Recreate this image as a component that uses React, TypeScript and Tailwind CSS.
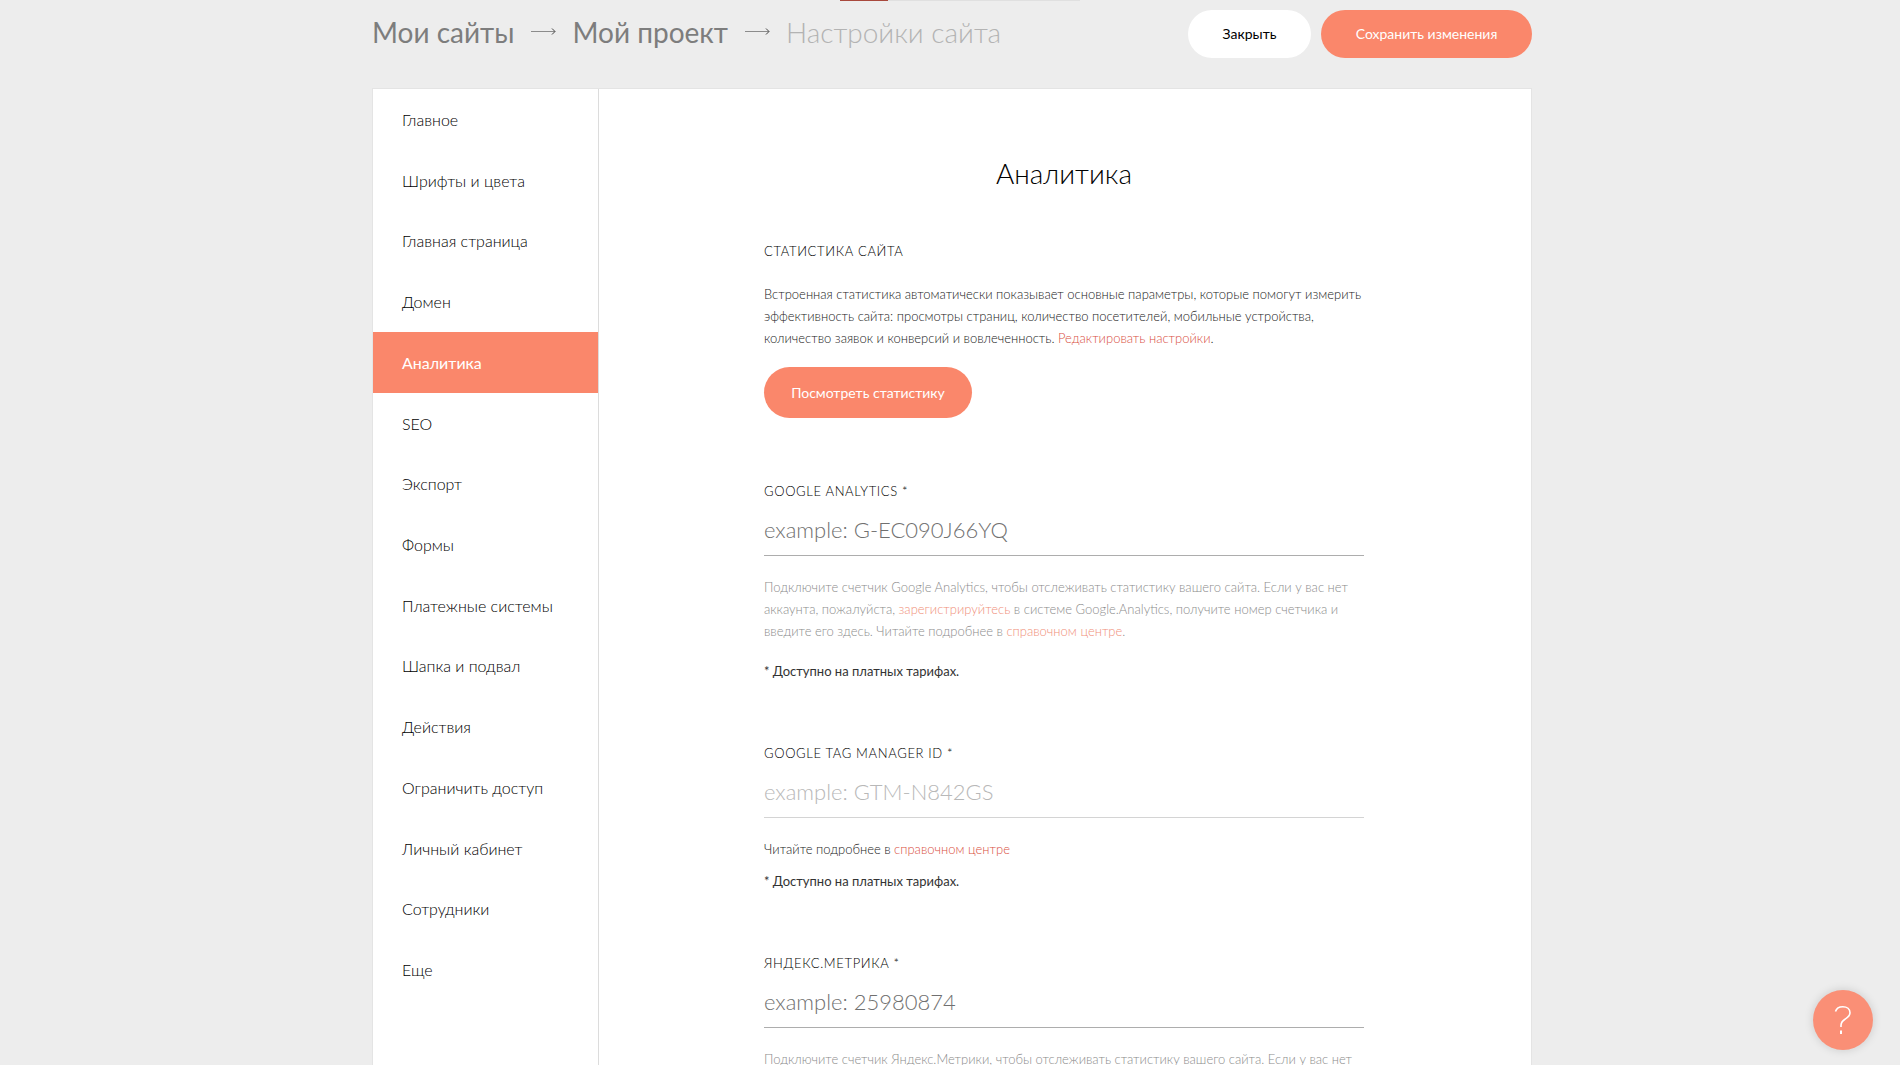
import React, { useState } from 'react';

interface NavItem {
  id: string;
  label: string;
}

interface CounterFieldProps {
  id: string;
  label: string;
  placeholder: string;
  muted?: boolean;
  className?: string;
  children: React.ReactNode;
}

const navItems: NavItem[] = [
  { id: 'main', label: 'Главное' },
  { id: 'fonts', label: 'Шрифты и цвета' },
  { id: 'home', label: 'Главная страница' },
  { id: 'domain', label: 'Домен' },
  { id: 'analytics', label: 'Аналитика' },
  { id: 'seo', label: 'SEO' },
  { id: 'export', label: 'Экспорт' },
  { id: 'forms', label: 'Формы' },
  { id: 'payments', label: 'Платежные системы' },
  { id: 'header', label: 'Шапка и подвал' },
  { id: 'actions', label: 'Действия' },
  { id: 'access', label: 'Ограничить доступ' },
  { id: 'members', label: 'Личный кабинет' },
  { id: 'team', label: 'Сотрудники' },
  { id: 'more', label: 'Еще' },
];

const Arrow: React.FC = () => (
  <svg className="mx-4 h-3 w-[26px] shrink-0" viewBox="0 0 26 12" fill="none" aria-hidden="true">
    <path d="M1 5.5H25" stroke="#8c8c8c" />
    <path d="M22 2.5L25 5.5L22 8.5" stroke="#444" />
  </svg>
);

const PaidNote: React.FC = () => (
  <p className="text-[13px] leading-[22px] font-normal text-[#333]">* Доступно на платных тарифах.</p>
);

const CounterField: React.FC<CounterFieldProps> = ({ id, label, placeholder, muted, className, children }) => {
  const [value, setValue] = useState('');

  return (
    <section className={className}>
      <label htmlFor={id} className="block text-[13px] leading-4 tracking-wider uppercase">
        {label} *
      </label>
      <input
        id={id}
        type="text"
        value={value}
        onChange={e => setValue(e.target.value)}
        placeholder={placeholder}
        className={
          muted
            ? 'mt-2 block h-[49px] w-full border-b border-[#d4d4d4] pb-1 text-[22px] outline-none placeholder:text-[#b8b8b8]'
            : 'mt-2 block h-[49px] w-full border-b border-[#adadad] pb-1 text-[22px] outline-none placeholder:text-[#707070]'
        }
      />
      <div className="mt-5">{children}</div>
    </section>
  );
};

const App: React.FC = () => {
  const [activeItem, setActiveItem] = useState('analytics');

  return (
    <div className="min-h-screen bg-[#ededed] font-['Lato','Open_Sans',sans-serif] font-light text-black">
      <div className="pl-5">
        <div className="mx-auto h-px w-60 bg-[#e0e0e0]">
          <div className="h-px w-1/5 bg-[#a8483c]" />
        </div>
      </div>

      <div className="pl-1">
        <div className="mx-auto max-w-[1160px]">
          <header className="flex h-[87px] items-start justify-between pt-[9px]">
            <nav className="flex h-11 items-center text-[28px] leading-9" aria-label="Навигация">
              <a href="#sites" className="font-normal text-[#7d7d7d]">Мои сайты</a>
              <Arrow />
              <a href="#project" className="font-normal text-[#7d7d7d]">Мой проект</a>
              <Arrow />
              <span className="text-[#b3b3b3]">Настройки сайта</span>
            </nav>
            <div className="flex gap-[10px] text-sm font-normal">
              <button type="button" className="h-12 w-[123px] rounded-full bg-white">
                Закрыть
              </button>
              <button type="button" className="h-12 w-[211px] rounded-full bg-[#fa876b] text-white">
                Сохранить изменения
              </button>
            </div>
          </header>

          <div className="flex border border-[#e4e4e4] bg-white">
            <aside className="w-[226px] shrink-0 border-r border-[#dcdcdc]">
              <ul className="grid min-h-[911px] auto-rows-fr">
                {navItems.map(item => (
                  <li key={item.id}>
                    <a
                      href={`#${item.id}`}
                      onClick={() => setActiveItem(item.id)}
                      className={
                        item.id === activeItem
                          ? 'flex h-full items-center bg-[#fa876b] px-[29px] pt-px text-base font-normal text-white'
                          : 'flex h-full items-center px-[29px] pt-px text-base text-black'
                      }
                    >
                      {item.label}
                    </a>
                  </li>
                ))}
              </ul>
            </aside>

            <main className="flex-1 pt-16 pr-0.5 pb-20">
              <div className="mx-auto max-w-[600px]">
                <h1 className="text-center text-[28px] leading-10">Аналитика</h1>

                <section className="mt-[50px]">
                  <h2 className="text-[13px] leading-4 tracking-wider uppercase">Статистика сайта</h2>
                  <p className="mt-6 text-[13px] leading-[22px] whitespace-nowrap text-[#222]">
                    Встроенная статистика автоматически показывает основные параметры, которые помогут измерить
                    <br />
                    эффективность сайта: просмотры страниц, количество посетителей, мобильные устройства,
                    <br />
                    количество заявок и конверсий и вовлеченность.{' '}
                    <a href="#edit" className="text-[#d9503f]">Редактировать настройки</a>.
                  </p>
                  <button
                    type="button"
                    className="mt-[18px] h-[51px] w-[208px] rounded-full bg-[#fa876b] text-sm font-normal text-white"
                  >
                    Посмотреть статистику
                  </button>
                </section>

                <CounterField
                  id="google-analytics"
                  label="Google Analytics"
                  placeholder="example: G-EC090J66YQ"
                  className="mt-[65px]"
                >
                  <p className="mb-[18px] text-[13px] leading-[22px] whitespace-nowrap text-[#8c8c8c]">
                    Подключите счетчик Google Analytics, чтобы отслеживать статистику вашего сайта. Если у вас нет
                    <br />
                    аккаунта, пожалуйста, <a href="#signup" className="text-[#f0907a]">зарегистрируйтесь</a> в системе
                    Google.Analytics, получите номер счетчика и
                    <br />
                    введите его здесь. Читайте подробнее в{' '}
                    <a href="#help-ga" className="text-[#f0907a]">справочном центре</a>.
                  </p>
                  <PaidNote />
                </CounterField>

                <CounterField
                  id="google-tag-manager"
                  label="Google Tag Manager ID"
                  placeholder="example: GTM-N842GS"
                  muted
                  className="mt-[63px]"
                >
                  <p className="mb-[10px] text-[13px] leading-[22px] text-[#222]">
                    Читайте подробнее в <a href="#help-gtm" className="text-[#d9503f]">справочном центре</a>
                  </p>
                  <PaidNote />
                </CounterField>

                <CounterField
                  id="yandex-metrika"
                  label="Яндекс.Метрика"
                  placeholder="example: 25980874"
                  className="mt-[63px]"
                >
                  <p className="text-[13px] leading-[22px] whitespace-nowrap text-[#8c8c8c]">
                    Подключите счетчик Яндекс.Метрики, чтобы отслеживать статистику вашего сайта. Если у вас нет
                  </p>
                </CounterField>
              </div>
            </main>
          </div>
        </div>
      </div>

      <button
        type="button"
        aria-label="Помощь"
        className="fixed right-[27px] bottom-[15px] flex size-[60px] items-center justify-center rounded-full bg-[#fa8f76] shadow-[0_0_10px_rgba(0,0,0,0.15)]"
      >
        <svg className="h-[30px] w-5" viewBox="0 0 20 30" fill="none" stroke="#fff" strokeWidth="1.6" aria-hidden="true">
          <path d="M2.5 6.5C3.4 3.4 6 1.7 9.8 1.7C14 1.7 17 4 17 7.8C17 11.2 14.6 12.6 12 14.2C9.4 15.8 8 17.4 8 20.5V22" />
          <path d="M8 25.5V29" strokeWidth="2" />
        </svg>
      </button>
    </div>
  );
};

export default App;
